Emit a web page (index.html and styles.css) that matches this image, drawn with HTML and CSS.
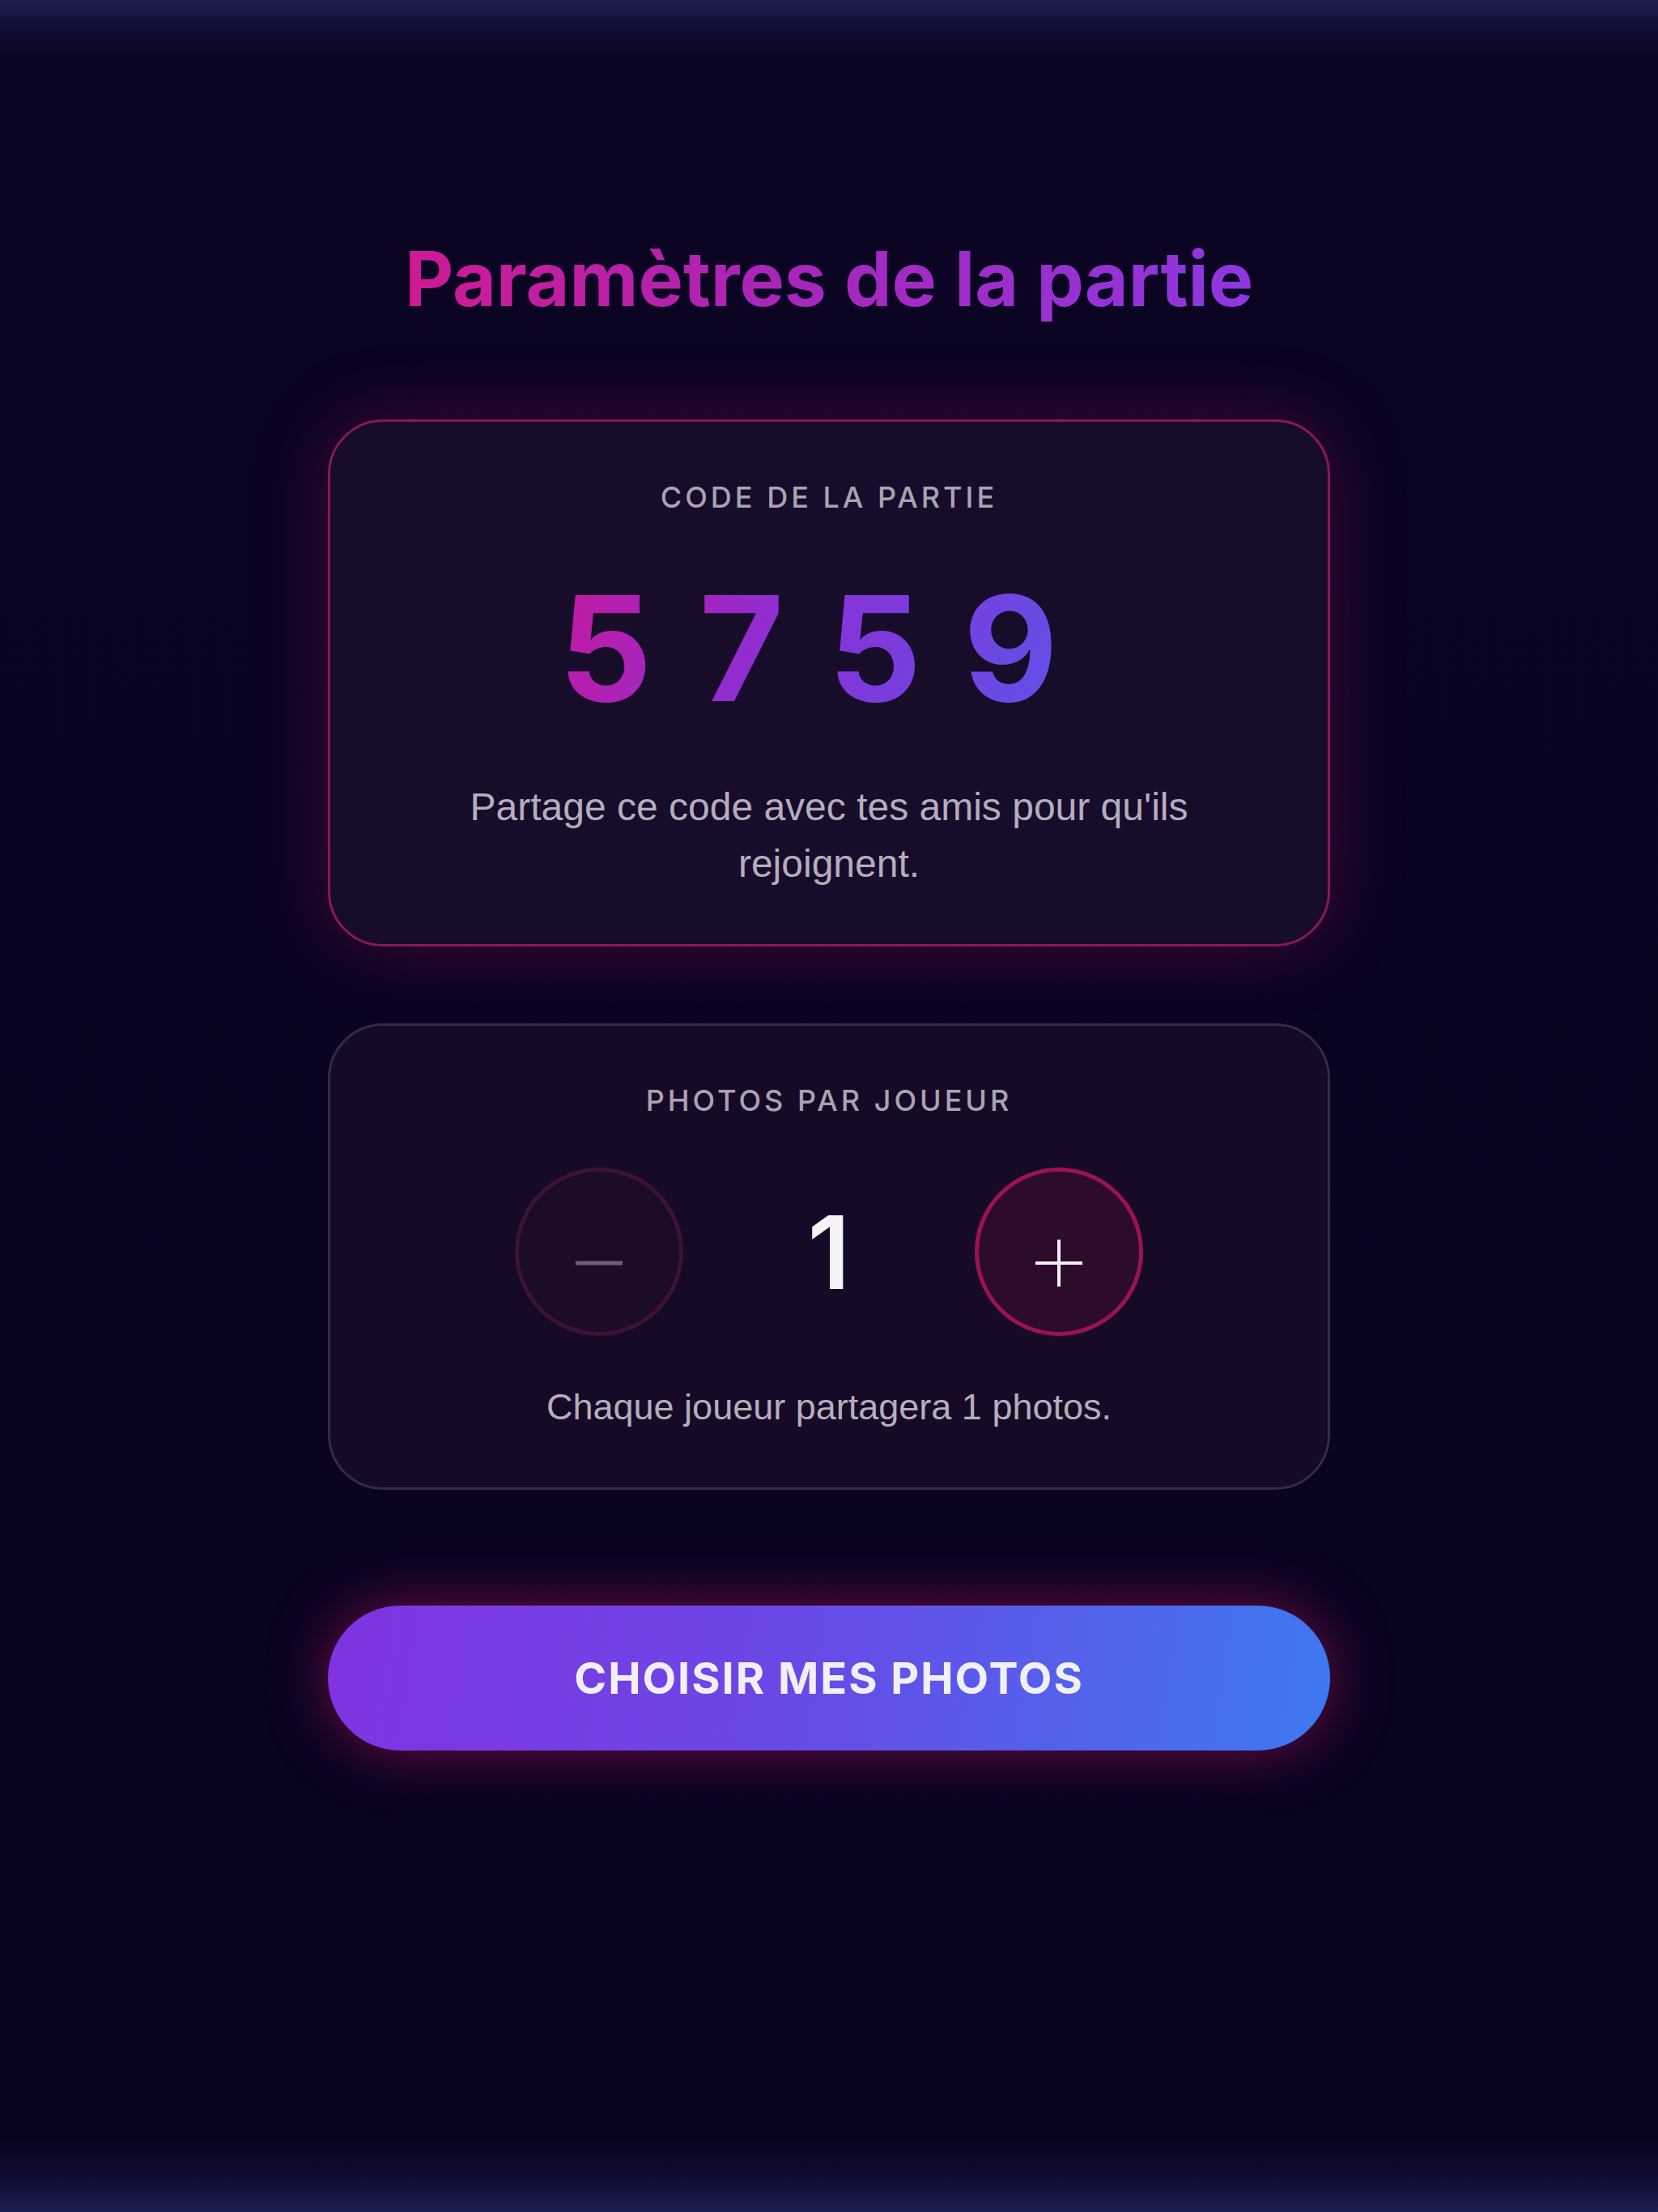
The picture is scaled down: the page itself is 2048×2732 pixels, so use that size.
FILE: index.html
```html
<!DOCTYPE html>
<html lang="fr">
<head>
    <meta charset="UTF-8">
    <meta name="viewport" content="width=device-width, initial-scale=1.0">
    <title>Paramètres de la partie</title>
    <link rel="stylesheet" href="styles.css">
</head>
<body>
    <main class="setup">
        <h1 class="setup-title">Paramètres de la partie</h1>

        <section class="card card-code">
            <h2 class="card-label">Code de la partie</h2>
            <div class="game-code">5759</div>
            <p class="card-note">Partage ce code avec tes amis pour qu'ils rejoignent.</p>
        </section>

        <section class="card card-photos">
            <h2 class="card-label">Photos par joueur</h2>
            <div class="stepper">
                <button class="step-btn step-minus" type="button" aria-label="Moins">
                    <svg viewBox="0 0 60 60" width="60" height="60">
                        <line x1="1" y1="44" x2="59" y2="44" stroke="#6a6378" stroke-width="5"/>
                    </svg>
                </button>
                <div class="step-value">1</div>
                <button class="step-btn step-plus" type="button" aria-label="Plus">
                    <svg viewBox="0 0 60 60" width="60" height="60">
                        <line x1="1" y1="44" x2="59" y2="44" stroke="#f2f0f6" stroke-width="4"/>
                        <line x1="30" y1="15" x2="30" y2="73" stroke="#f2f0f6" stroke-width="4"/>
                    </svg>
                </button>
            </div>
            <p class="card-note">Chaque joueur partagera 1 photos.</p>
        </section>

        <button class="cta" type="button">Choisir mes photos</button>
    </main>
</body>
</html>
```

FILE: styles.css
```css
* {
    box-sizing: border-box;
}
html, body {
    height: 100%;
}
body {
    margin: 0;
    font-family: Inter, "Liberation Sans", sans-serif;
    background: linear-gradient(to bottom,
        #1d2152 0px,
        #120f36 30px,
        #0b0422 75px,
        #0a0320 calc(100% - 90px),
        #110f36 calc(100% - 35px),
        #1b2152 100%);
    color: #f2f0f6;
}
.setup {
    width: 1238px;
    margin: 0 auto;
    padding-top: 289px;
    display: flex;
    flex-direction: column;
    align-items: stretch;
}
.setup-title {
    margin: 0;
    font-size: 93px;
    line-height: 110px;
    font-weight: 700;
    text-align: center;
    background: linear-gradient(90deg, #d8178c 0%, #a826b8 45%, #8a3ae8 100%);
    -webkit-background-clip: text;
    background-clip: text;
    color: transparent;
}
.card {
    border-radius: 68px;
    text-align: center;
}
.card-code {
    margin-top: 119px;
    background-color: #170c29;
    border: 3px solid #861a55;
    padding: 72px 100px 64px;
    box-shadow: 0 0 90px rgba(200, 24, 110, 0.28);
}
.card-photos {
    margin-top: 95px;
    background-color: #170a26;
    border: 3px solid #352b47;
    padding: 71px 100px 64px;
}
.card-label {
    margin: 0;
    font-size: 36px;
    line-height: 43px;
    font-weight: 500;
    letter-spacing: 4px;
    text-transform: uppercase;
    color: #a9a3b3;
}
.game-code {
    width: fit-content;
    margin: 75px auto 0;
    font-size: 180px;
    line-height: 180px;
    font-weight: 700;
    letter-spacing: 50px;
    font-variant-numeric: tabular-nums;
    background: linear-gradient(115deg, #c4199e 0%, #8c2fd6 42%, #5a56ea 100%);
    -webkit-background-clip: text;
    background-clip: text;
    color: transparent;
}
.card-note {
    margin: 71px 0 0;
    font-family: "Liberation Sans", Arial, sans-serif;
    font-size: 48px;
    line-height: 70px;
    color: #b4aebd;
}
.card-photos .card-note {
    margin-top: 53px;
    font-size: 45px;
}
.stepper {
    margin-top: 61px;
    display: flex;
    justify-content: center;
    align-items: center;
    gap: 120px;
}
.step-btn {
    width: 208px;
    height: 208px;
    border-radius: 50%;
    padding: 0;
    display: flex;
    align-items: center;
    justify-content: center;
    cursor: pointer;
}
.step-btn svg {
    overflow: visible;
}
.step-minus {
    background-color: #1d0c27;
    border: 5px solid #3d1236;
}
.step-plus {
    background-color: #2d0c2b;
    border: 5px solid #9a1450;
}
.step-value {
    width: 120px;
    font-size: 125px;
    line-height: 125px;
    font-weight: 600;
    color: #f4f3f6;
    text-align: center;
}
.cta {
    margin-top: 143px;
    height: 179px;
    border: none;
    border-radius: 90px;
    background: linear-gradient(100deg, #8133e1 0%, #6a48e6 45%, #3e79f0 100%);
    box-shadow: 0 0 70px rgba(205, 22, 110, 0.5);
    font-family: Inter, "Liberation Sans", sans-serif;
    font-size: 54px;
    font-weight: 700;
    letter-spacing: 2px;
    text-transform: uppercase;
    color: #f1eff8;
    cursor: pointer;
}
```
